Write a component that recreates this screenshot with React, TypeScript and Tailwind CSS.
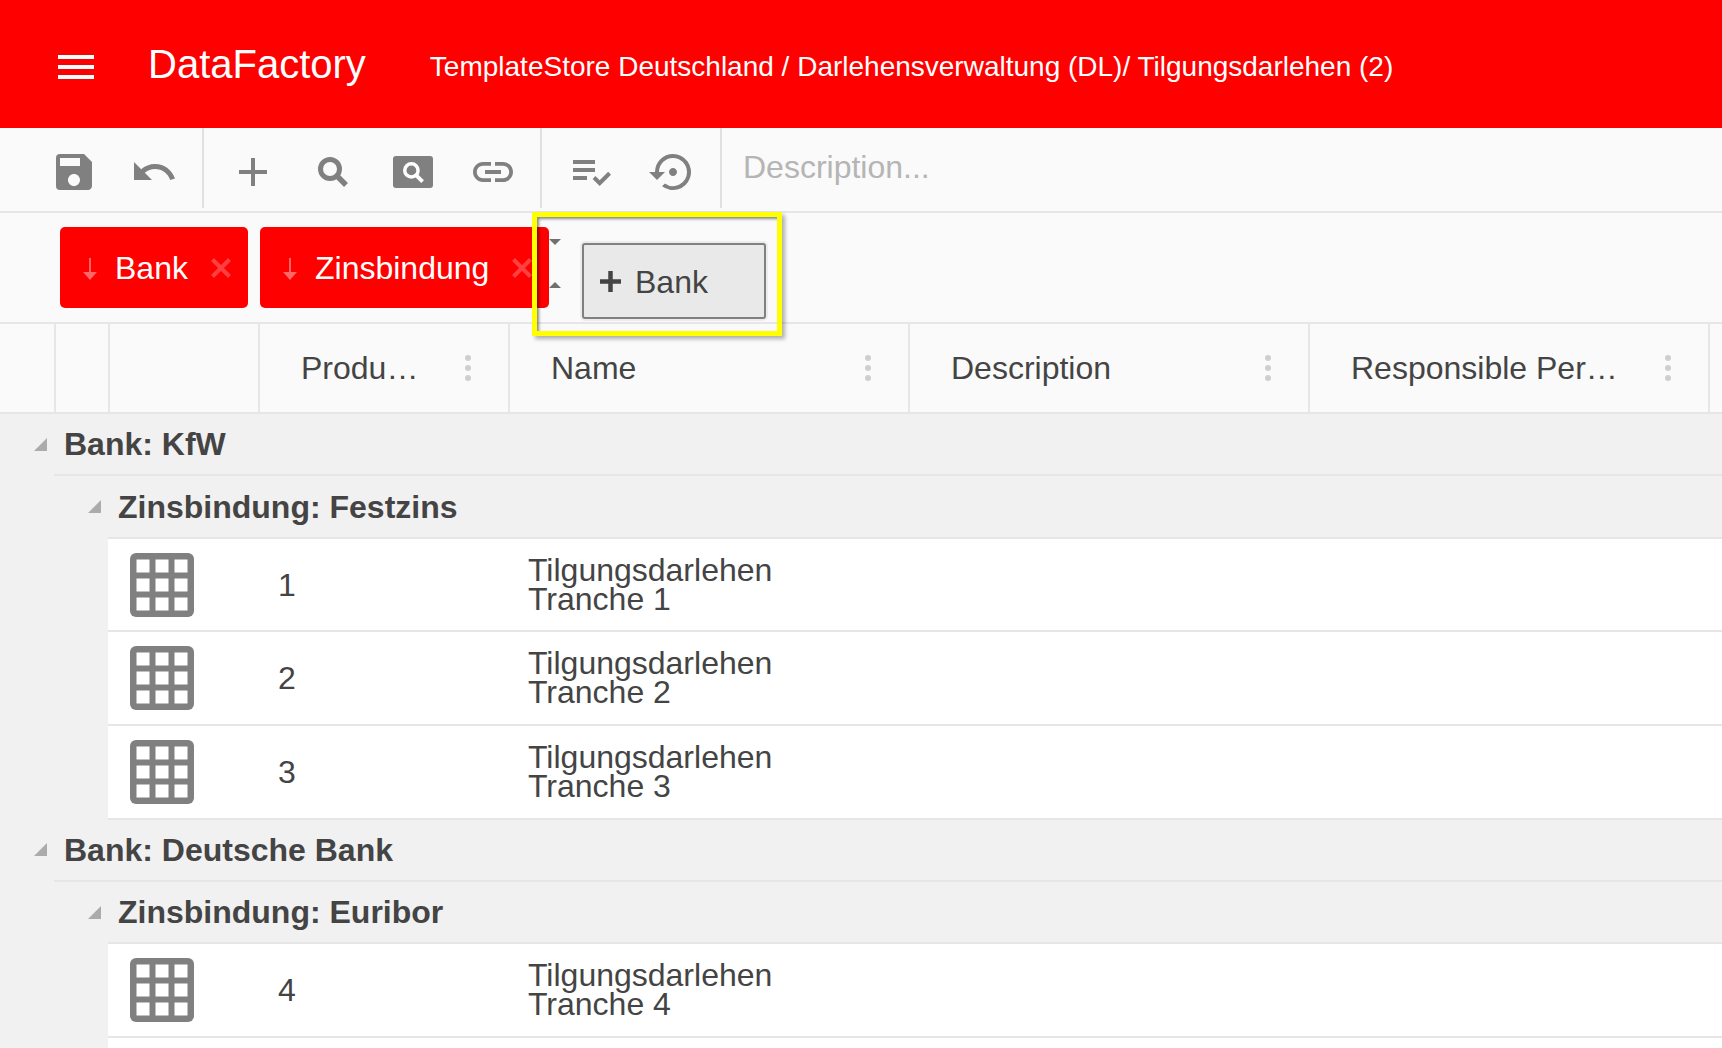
import { MdSave, MdUndo, MdAdd, MdLink, MdPlaylistAddCheck, MdSettingsBackupRestore } from 'react-icons/md';

const FONT = "font-['Liberation_Sans',Arial,sans-serif]";

function GridIcon() {
  return (
    <svg width="64" height="64" viewBox="0 0 64 64">
      <rect width="64" height="64" rx="6" fill="#808080" />
      {[6.5, 25.5, 44.5].map(y =>
        [6.5, 25.5, 44.5].map(x => <rect key={`${x}-${y}`} x={x} y={y} width="13" height="13" fill="#fff" />)
      )}
    </svg>
  );
}

function Tri({ className }: { className: string }) {
  return (
    <svg width="13" height="13" viewBox="0 0 13 13" className={className}>
      <polygon points="13,0 13,13 0,13" fill="#ababab" />
    </svg>
  );
}

function BoldSearch({ size, color }: { size: number; color: string }) {
  return (
    <svg width={size} height={size} viewBox="0 0 30 30" fill="none" stroke={color}>
      <circle cx="12" cy="12" r="9.5" strokeWidth="5" />
      <path d="M19 19l9 9" strokeWidth="5.5" />
    </svg>
  );
}

function Chip({ label, width }: { label: string; width: string }) {
  return (
    <div className={`h-[81px] ${width} bg-[#ff0000] rounded-[5px] flex items-center text-white text-[32px] pl-[22px] pr-[17px]`}>
      <svg width="16" height="23" viewBox="0 0 16 23" className="flex-shrink-0 mr-[17px] mt-[3px]">
        <path d="M8 0v15" stroke="#ff6666" strokeWidth="2" />
        <path d="M1 14h14l-7 8z" fill="#ff6666" />
      </svg>
      <span>{label}</span>
      <svg width="20" height="20" viewBox="0 0 20 20" className="ml-auto flex-shrink-0 mt-[1px]">
        <path d="M1.5 1.5l17 17M18.5 1.5l-17 17" stroke="#ff4040" strokeWidth="4" />
      </svg>
    </div>
  );
}

function HeaderCell({ label, width }: { label: string; width: string }) {
  return (
    <div className={`${width} flex-shrink-0 border-r-2 border-[#e6e6e6] flex items-center pl-[41px] pr-[37px] justify-between`}>
      <span className="text-[32px] text-[#444]">{label}</span>
      <div className="flex flex-col gap-[4px]">
        <div className="w-[6px] h-[6px] rounded-full bg-[#cfcfcf]" />
        <div className="w-[6px] h-[6px] rounded-full bg-[#cfcfcf]" />
        <div className="w-[6px] h-[6px] rounded-full bg-[#cfcfcf]" />
      </div>
    </div>
  );
}

function Row({ num, name }: { num: number; name: string }) {
  return (
    <div className="ml-[108px] h-[93.6px] bg-white border-b-2 border-[#e6e6e6] flex items-center">
      <div className="w-[151px] pl-[22px] flex-shrink-0">
        <GridIcon />
      </div>
      <div className="w-[250px] pl-[19px] flex-shrink-0 text-[32px] text-[#444]">{num}</div>
      <div className="text-[32px] leading-[29px] text-[#444] pl-[19px]">
        Tilgungsdarlehen
        <br />
        {name}
      </div>
    </div>
  );
}

function GroupRow({ label, level }: { label: string; level: number }) {
  return (
    <div className={`h-[60.4px] flex items-center ${level === 0 ? 'pl-[34px]' : 'pl-[88px]'}`}>
      <Tri className="flex-shrink-0 mr-[17px]" />
      <span className="font-bold text-[32px] text-[#444]">{label}</span>
    </div>
  );
}

export default function App() {
  return (
    <div className={`${FONT} h-[1048px] w-[1722px] overflow-hidden bg-[#f1f1f1] relative`}>
      {/* top bar */}
      <div className="h-[128px] bg-[#ff0000] text-white flex items-center">
        <div className="ml-[58px] w-[36px] flex flex-col gap-[6px] mt-[6px]">
          <div className="h-[4px] bg-[#e8ffff]" />
          <div className="h-[4px] bg-[#e8ffff]" />
          <div className="h-[4px] bg-[#e8ffff]" />
        </div>
        <div className="ml-[54px] text-[40px]">DataFactory</div>
        <div className="ml-[64px] text-[28px] mt-[5px]">
          TemplateStore Deutschland / Darlehensverwaltung (DL)/ Tilgungsdarlehen (2)
        </div>
      </div>

      {/* toolbar */}
      <div className="h-[85px] bg-[#fafafa] border-b-2 border-[#e6e6e6] flex text-[#808080]">
        <div className="w-[204px] h-[80px] border-r-2 border-[#e0e0e0] flex items-center gap-[32px] pl-[50px] pt-[8px]">
          <MdSave size={48} />
          <MdUndo size={48} />
        </div>
        <div className="w-[338px] h-[80px] border-r-2 border-[#e0e0e0] flex items-center gap-[32px] pl-[25px] pt-[8px]">
          <MdAdd size={48} />
          <div className="w-[48px] flex justify-center">
            <BoldSearch size={30} color="#808080" />
          </div>
          <div className="w-[48px] flex justify-center">
            <div className="w-[40px] h-[32px] bg-[#808080] rounded-[3px] flex items-center justify-center">
              <BoldSearch size={21} color="#fff" />
            </div>
          </div>
          <MdLink size={48} />
        </div>
        <div className="w-[180px] h-[80px] border-r-2 border-[#e0e0e0] flex items-center gap-[34px] pl-[25px] pt-[8px]">
          <MdPlaylistAddCheck size={48} />
          <MdSettingsBackupRestore size={48} />
        </div>
        <div className="pl-[21px] pt-[15px] text-[32px] text-[#b5b5b5]">Description...</div>
      </div>

      {/* group panel */}
      <div className="h-[111px] bg-[#fafafa] border-b-2 border-[#e6e6e6] flex items-start pl-[60px] pt-[14px] gap-[12px]">
        <Chip label="Bank" width="w-[188px]" />
        <Chip label="Zinsbindung" width="w-[289px]" />
      </div>

      {/* column headers */}
      <div className="h-[90px] bg-[#fafafa] border-b-2 border-[#e6e6e6] flex">
        <div className="w-[56px] flex-shrink-0 border-r-2 border-[#e6e6e6]" />
        <div className="w-[54px] flex-shrink-0 border-r-2 border-[#e6e6e6]" />
        <div className="w-[150px] flex-shrink-0 border-r-2 border-[#e6e6e6]" />
        <HeaderCell label="Produ…" width="w-[250px]" />
        <HeaderCell label="Name" width="w-[400px]" />
        <HeaderCell label="Description" width="w-[400px]" />
        <HeaderCell label="Responsible Per…" width="w-[400px]" />
      </div>

      {/* grouped rows */}
      <GroupRow label="Bank: KfW" level={0} />
      <div className="ml-[54px] h-[2px] bg-[#e6e6e6]" />
      <GroupRow label="Zinsbindung: Festzins" level={1} />
      <div className="ml-[108px] h-[2px] bg-[#e6e6e6]" />
      <Row num={1} name="Tranche 1" />
      <Row num={2} name="Tranche 2" />
      <Row num={3} name="Tranche 3" />
      <GroupRow label="Bank: Deutsche Bank" level={0} />
      <div className="ml-[54px] h-[2px] bg-[#e6e6e6]" />
      <GroupRow label="Zinsbindung: Euribor" level={1} />
      <div className="ml-[108px] h-[2px] bg-[#e6e6e6]" />
      <Row num={4} name="Tranche 4" />
      <div className="ml-[108px] h-[20px] bg-white" />

      {/* drag hint over the group panel */}
      <div className="absolute left-[532px] top-[212px] w-[250px] h-[124px] border-[5px] border-[#ffff00] shadow-[inset_2px_2px_3px_rgba(0,0,0,0.45),3px_3px_4px_rgba(0,0,0,0.3)]">
        <div className="absolute left-[12px] top-[22px] w-0 h-0 border-x-[6px] border-x-transparent border-t-[6px] border-t-[#707070]" />
        <div className="absolute left-[12px] top-[65px] w-0 h-0 border-x-[6px] border-x-transparent border-b-[6px] border-b-[#707070]" />
        <div className="absolute left-[45px] top-[26px] w-[184px] h-[76px] bg-[#e9e9e9] border-2 border-[#808080] rounded-[3px] flex items-center pl-[16px] text-[32px] text-[#444] shadow-[0_0_0_2px_#ececec]">
          <svg width="21" height="21" viewBox="0 0 21 21" className="mr-[14px] mt-[1px] flex-shrink-0">
            <path d="M10.5 0v21M0 10.5h21" stroke="#444" strokeWidth="4.5" />
          </svg>
          <span className="mt-[2px]">Bank</span>
        </div>
      </div>
    </div>
  );
}
